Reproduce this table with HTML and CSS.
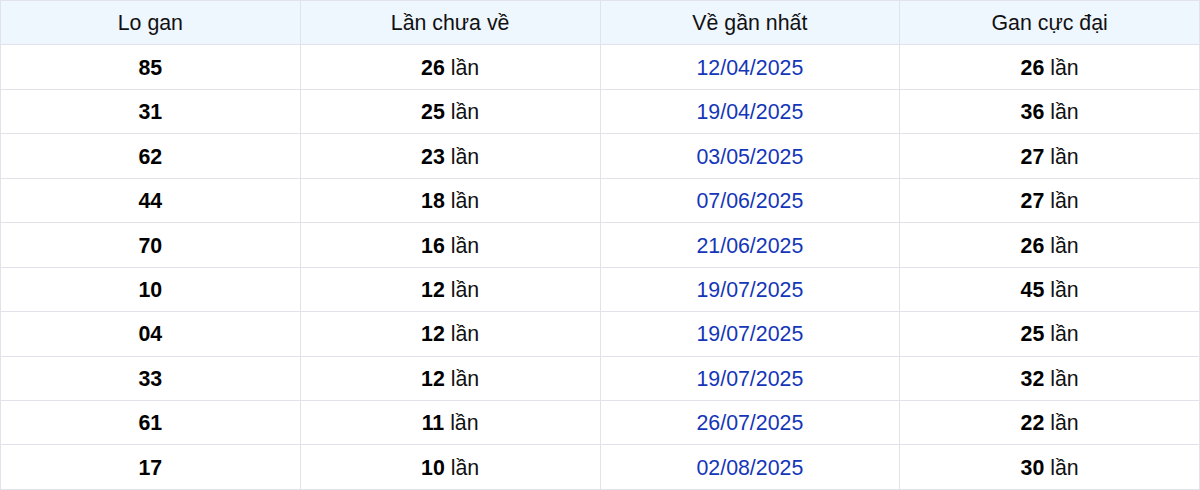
FILE: index.html
```html
<!DOCTYPE html>
<html lang="vi">
<head>
<meta charset="utf-8">
<title>Lo gan</title>
<link rel="stylesheet" href="styles.css">
</head>
<body>
<table class="gan-table">
  <thead>
    <tr><th>Lo gan</th><th>Lần chưa về</th><th>Về gần nhất</th><th>Gan cực đại</th></tr>
  </thead>
  <tbody>
    <tr><td><b>85</b></td><td><b>26</b> lần</td><td class="date">12/04/2025</td><td><b>26</b> lần</td></tr>
    <tr><td><b>31</b></td><td><b>25</b> lần</td><td class="date">19/04/2025</td><td><b>36</b> lần</td></tr>
    <tr><td><b>62</b></td><td><b>23</b> lần</td><td class="date">03/05/2025</td><td><b>27</b> lần</td></tr>
    <tr><td><b>44</b></td><td><b>18</b> lần</td><td class="date">07/06/2025</td><td><b>27</b> lần</td></tr>
    <tr><td><b>70</b></td><td><b>16</b> lần</td><td class="date">21/06/2025</td><td><b>26</b> lần</td></tr>
    <tr><td><b>10</b></td><td><b>12</b> lần</td><td class="date">19/07/2025</td><td><b>45</b> lần</td></tr>
    <tr><td><b>04</b></td><td><b>12</b> lần</td><td class="date">19/07/2025</td><td><b>25</b> lần</td></tr>
    <tr><td><b>33</b></td><td><b>12</b> lần</td><td class="date">19/07/2025</td><td><b>32</b> lần</td></tr>
    <tr><td><b>61</b></td><td><b>11</b> lần</td><td class="date">26/07/2025</td><td><b>22</b> lần</td></tr>
    <tr><td><b>17</b></td><td><b>10</b> lần</td><td class="date">02/08/2025</td><td><b>30</b> lần</td></tr>
  </tbody>
</table>
</body>
</html>
```
FILE: styles.css
```css
html, body {
  margin: 0;
  padding: 0;
  background: #ffffff;
}
body {
  font-family: "Liberation Sans", Arial, sans-serif;
  font-size: 21.33px;
  color: #111111;
}
.gan-table {
  width: 1200px;
  border-collapse: collapse;
  table-layout: fixed;
}
.gan-table tr {
  height: 44.45px;
}
.gan-table th,
.gan-table td {
  border: 1px solid #e2e2ea;
  text-align: center;
  vertical-align: middle;
  padding: 3px 0 0;
  line-height: 1.2;
}
.gan-table th {
  background: #eef6fe;
  font-weight: normal;
  color: #111111;
}
.gan-table b {
  font-weight: bold;
  color: #000000;
}
.gan-table .date {
  color: #1436b8;
}
```
